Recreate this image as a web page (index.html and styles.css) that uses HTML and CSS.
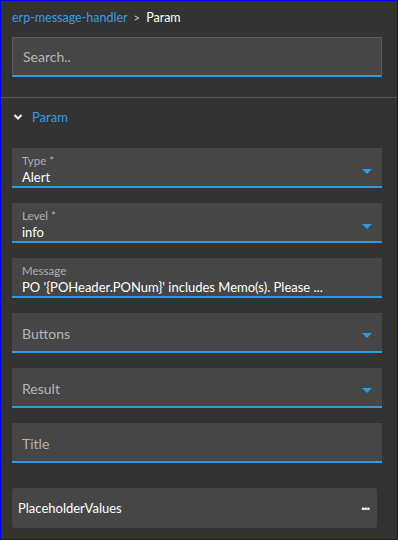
FILE: index.html
```html
<!DOCTYPE html>
<html>
<head>
    <title>Param</title>
    <link rel="stylesheet" href="styles.css">
</head>
<body>
    <div class="panel">
        <div class="crumbs">
            <a class="crumb-link">erp-message-handler</a>
            <span class="crumb-sep">&gt;</span>
            <span class="crumb-current">Param</span>
        </div>

        <div class="search">
            <input type="text" placeholder="Search..">
        </div>

        <div class="divider"></div>

        <div class="section-head">
            <svg class="chevron" width="10" height="8" viewBox="0 0 10 8">
                <path d="M1.5 2 L5 5.5 L8.5 2" fill="none" stroke="#e8e8e8" stroke-width="2.2"/>
            </svg>
            <span>Param</span>
        </div>

        <div class="fields">
            <!-- Type -->
            <div class="field select">
                <div class="label">Type *</div>
                <div class="value">Alert</div>
                <span class="arrow"></span>
            </div>

            <!-- Level -->
            <div class="field select">
                <div class="label">Level *</div>
                <div class="value">info</div>
                <span class="arrow"></span>
            </div>

            <!-- Message -->
            <div class="field">
                <div class="label">Message</div>
                <div class="value big">PO '{POHeader.PONum}' includes Memo(s). Please ...</div>
            </div>

            <div class="field select empty">
                <div class="placeholder">Buttons</div>
                <span class="arrow"></span>
            </div>

            <div class="field select empty">
                <div class="placeholder">Result</div>
                <span class="arrow"></span>
            </div>

            <div class="field empty">
                <div class="placeholder">Title</div>
            </div>
        </div>

        <div class="card">
            <span>PlaceholderValues</span>
            <span class="dots">&middot;&middot;&middot;</span>
        </div>
    </div>
</body>
</html>
```

FILE: styles.css
```css
body {
    margin: 0;
    font-family: Lato, "Open Sans", sans-serif;
    background-color: #333333;
}

.panel {
    width: 398px;
    height: 540px;
    box-sizing: border-box;
    border: 1px solid #0000ff;
    background-color: #333333;
    padding-top: 8px;
}

.crumbs {
    padding-left: 11px;
    font-size: 12.5px;
    height: 17px;
    line-height: 17px;
    color: #ffffff;
}

.crumb-link {
    color: #3a9be0;
}

.crumb-sep {
    color: #cccccc;
    margin: 0 3px;
    font-size: 11px;
}

.search {
    margin: 11px 15px 0 11px;
}

.search input {
    display: block;
    width: 100%;
    height: 40px;
    box-sizing: border-box;
    background-color: #464646;
    border: 1px solid #5c5c5c;
    border-bottom: 2px solid #2d9be2;
    padding: 0 10px;
    font-family: Lato, "Open Sans", sans-serif;
    font-size: 14px;
    color: #ffffff;
    outline: none;
}

.search input::placeholder {
    color: #b5b5b5;
}

.divider {
    height: 1px;
    background-color: #575757;
    margin-top: 20px;
}

.section-head {
    display: flex;
    align-items: center;
    height: 38px;
    padding-left: 12px;
    font-size: 13px;
    color: #3a9be0;
}

.chevron {
    margin-right: 9px;
}

.fields {
    display: flex;
    flex-direction: column;
    gap: 15px;
    margin: 12px 15px 0 11px;
}

.field {
    position: relative;
    height: 40px;
    box-sizing: border-box;
    background-color: #464646;
    border-bottom: 2px solid #2d9be2;
    padding: 5px 10px 0 10px;
}

.label {
    font-size: 11.5px;
    line-height: 16px;
    color: #b0b0b0;
}

.value {
    font-size: 13px;
    line-height: 17px;
    color: #ffffff;
    white-space: nowrap;
}

.field.empty {
    display: flex;
    align-items: center;
    padding-top: 2px;
}

.placeholder {
    font-size: 14px;
    color: #b5b5b5;
}

.arrow {
    position: absolute;
    right: 10px;
    top: 21px;
    width: 0;
    height: 0;
    border-left: 5px solid transparent;
    border-right: 5px solid transparent;
    border-top: 5px solid #2d9be2;
}

.field.empty .arrow {
    top: 20px;
}

.card {
    display: flex;
    align-items: center;
    justify-content: space-between;
    height: 40px;
    margin: 25px 20px 0 11px;
    padding: 0 8px 0 6px;
    background-color: #464646;
    border-radius: 3px;
    font-size: 13px;
    color: #ffffff;
}

.dots {
    font-weight: bold;
    font-size: 13px;
    letter-spacing: -1px;
}
```
